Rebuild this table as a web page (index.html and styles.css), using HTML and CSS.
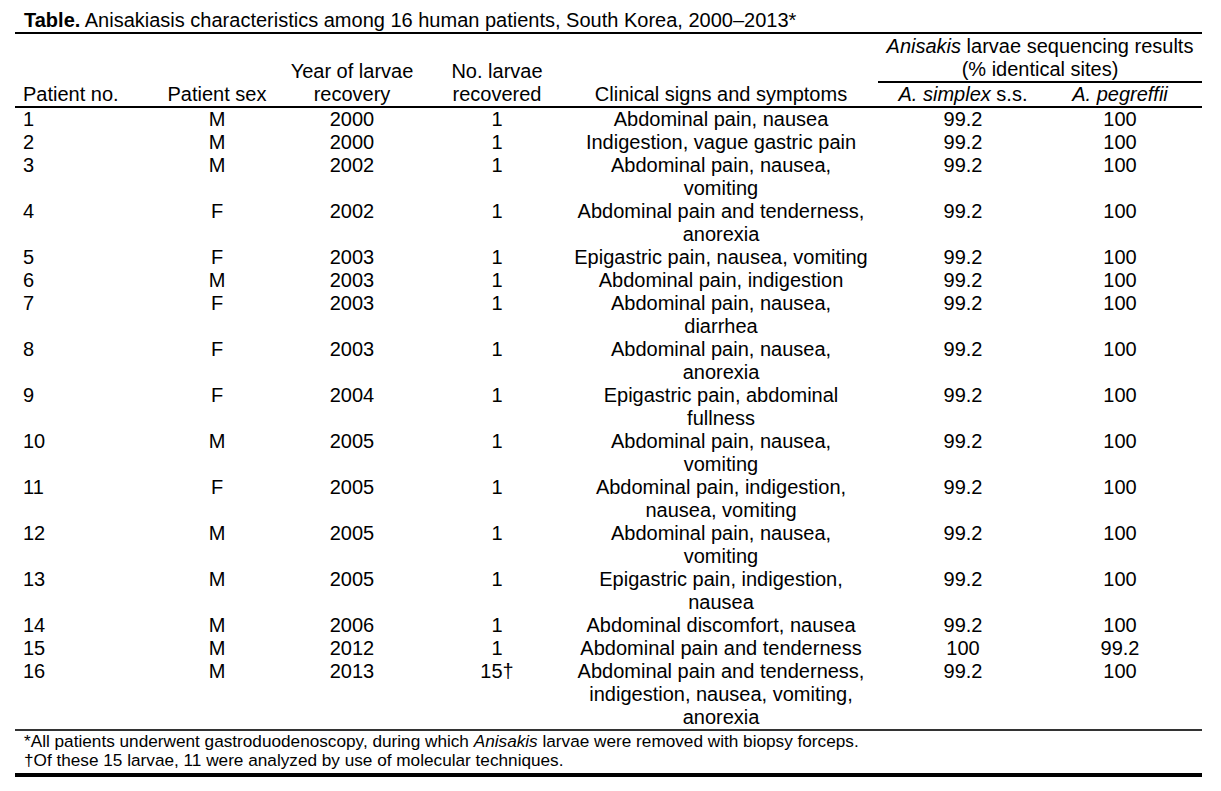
FILE: index.html
```html
<!DOCTYPE html>
<html lang="en">
<head>
<meta charset="utf-8">
<title>Table</title>
<link rel="stylesheet" href="styles.css">
</head>
<body>
<div class="page">
  <div class="title"><b>Table.</b> Anisakiasis characteristics among 16 human patients, South Korea, 2000–2013*</div>
  <table class="data">
    <colgroup>
      <col class="c1"><col class="c2"><col class="c3"><col class="c4"><col class="c5"><col class="c6"><col class="c7">
    </colgroup>
    <thead>
      <tr>
        <th rowspan="2" class="left bottom hdr">Patient no.</th>
        <th rowspan="2" class="bottom hdr">Patient sex</th>
        <th rowspan="2" class="bottom hdr">Year of larvae<br>recovery</th>
        <th rowspan="2" class="bottom hdr">No. larvae<br>recovered</th>
        <th rowspan="2" class="bottom hdr sym">Clinical signs and symptoms</th>
        <th colspan="2" class="group"><i>Anisakis</i> larvae sequencing results<br>(% identical sites)</th>
      </tr>
      <tr>
        <th class="hdr"><i>A. simplex</i> s.s.</th>
        <th class="hdr peg"><i>A. pegreffii</i></th>
      </tr>
    </thead>
    <tbody>
      <tr><td class="left">1</td><td>M</td><td>2000</td><td>1</td><td class="sym">Abdominal pain, nausea</td><td>99.2</td><td class="peg">100</td></tr>
      <tr><td class="left">2</td><td>M</td><td>2000</td><td>1</td><td class="sym">Indigestion, vague gastric pain</td><td>99.2</td><td class="peg">100</td></tr>
      <tr><td class="left">3</td><td>M</td><td>2002</td><td>1</td><td class="sym">Abdominal pain, nausea,<br>vomiting</td><td>99.2</td><td class="peg">100</td></tr>
      <tr><td class="left">4</td><td>F</td><td>2002</td><td>1</td><td class="sym">Abdominal pain and tenderness,<br>anorexia</td><td>99.2</td><td class="peg">100</td></tr>
      <tr><td class="left">5</td><td>F</td><td>2003</td><td>1</td><td class="sym">Epigastric pain, nausea, vomiting</td><td>99.2</td><td class="peg">100</td></tr>
      <tr><td class="left">6</td><td>M</td><td>2003</td><td>1</td><td class="sym">Abdominal pain, indigestion</td><td>99.2</td><td class="peg">100</td></tr>
      <tr><td class="left">7</td><td>F</td><td>2003</td><td>1</td><td class="sym">Abdominal pain, nausea,<br>diarrhea</td><td>99.2</td><td class="peg">100</td></tr>
      <tr><td class="left">8</td><td>F</td><td>2003</td><td>1</td><td class="sym">Abdominal pain, nausea,<br>anorexia</td><td>99.2</td><td class="peg">100</td></tr>
      <tr><td class="left">9</td><td>F</td><td>2004</td><td>1</td><td class="sym">Epigastric pain, abdominal<br>fullness</td><td>99.2</td><td class="peg">100</td></tr>
      <tr><td class="left">10</td><td>M</td><td>2005</td><td>1</td><td class="sym">Abdominal pain, nausea,<br>vomiting</td><td>99.2</td><td class="peg">100</td></tr>
      <tr><td class="left">11</td><td>F</td><td>2005</td><td>1</td><td class="sym">Abdominal pain, indigestion,<br>nausea, vomiting</td><td>99.2</td><td class="peg">100</td></tr>
      <tr><td class="left">12</td><td>M</td><td>2005</td><td>1</td><td class="sym">Abdominal pain, nausea,<br>vomiting</td><td>99.2</td><td class="peg">100</td></tr>
      <tr><td class="left">13</td><td>M</td><td>2005</td><td>1</td><td class="sym">Epigastric pain, indigestion,<br>nausea</td><td>99.2</td><td class="peg">100</td></tr>
      <tr><td class="left">14</td><td>M</td><td>2006</td><td>1</td><td class="sym">Abdominal discomfort, nausea</td><td>99.2</td><td class="peg">100</td></tr>
      <tr><td class="left">15</td><td>M</td><td>2012</td><td>1</td><td class="sym">Abdominal pain and tenderness</td><td>100</td><td class="peg">99.2</td></tr>
      <tr><td class="left">16</td><td>M</td><td>2013</td><td>15†</td><td class="sym">Abdominal pain and tenderness,<br>indigestion, nausea, vomiting,<br>anorexia</td><td>99.2</td><td class="peg">100</td></tr>
    </tbody>
  </table>
  <div class="notes">
    <div>*All patients underwent gastroduodenoscopy, during which <i>Anisakis</i> larvae were removed with biopsy forceps.</div>
    <div>†Of these 15 larvae, 11 were analyzed by use of molecular techniques.</div>
  </div>
</div>
</body>
</html>
```

FILE: styles.css
```css
html, body {
  margin: 0;
  padding: 0;
  background: #ffffff;
}
body {
  font-family: "Liberation Sans", Arial, sans-serif;
  color: #000000;
}
.page {
  width: 1187px;
  margin-left: 15px;
  padding-top: 9px;
}
.title {
  font-size: 20px;
  line-height: 23px;
  padding-left: 9px;
  border-bottom: 2px solid #000;
  white-space: nowrap;
}
.data {
  width: 1187px;
  margin-top: 1px;
  border-collapse: separate;
  border-spacing: 0;
  table-layout: fixed;
  font-size: 20px;
  line-height: 23px;
}
.c1 { width: 135px; }
.c2 { width: 134px; }
.c3 { width: 136px; }
.c4 { width: 154px; }
.c5 { width: 304px; }
.c6 { width: 170px; }
.c7 { width: 154px; }
th, td {
  padding: 0;
  font-weight: normal;
  text-align: center;
  vertical-align: top;
  white-space: nowrap;
}
thead th {
  border-bottom: 2px solid #000;
}
th.bottom { vertical-align: bottom; }
th.group {
  border-bottom: 2px solid #000;
}
.left {
  text-align: left;
  padding-left: 8px;
}
.sym { padding-right: 10px; }
.peg { padding-right: 10px; }
.notes {
  border-top: 2px solid #333;
  border-bottom: 4px solid #000;
  font-size: 17.2px;
  line-height: 19px;
  padding: 1px 0 3px 9px;
  white-space: nowrap;
}
```
